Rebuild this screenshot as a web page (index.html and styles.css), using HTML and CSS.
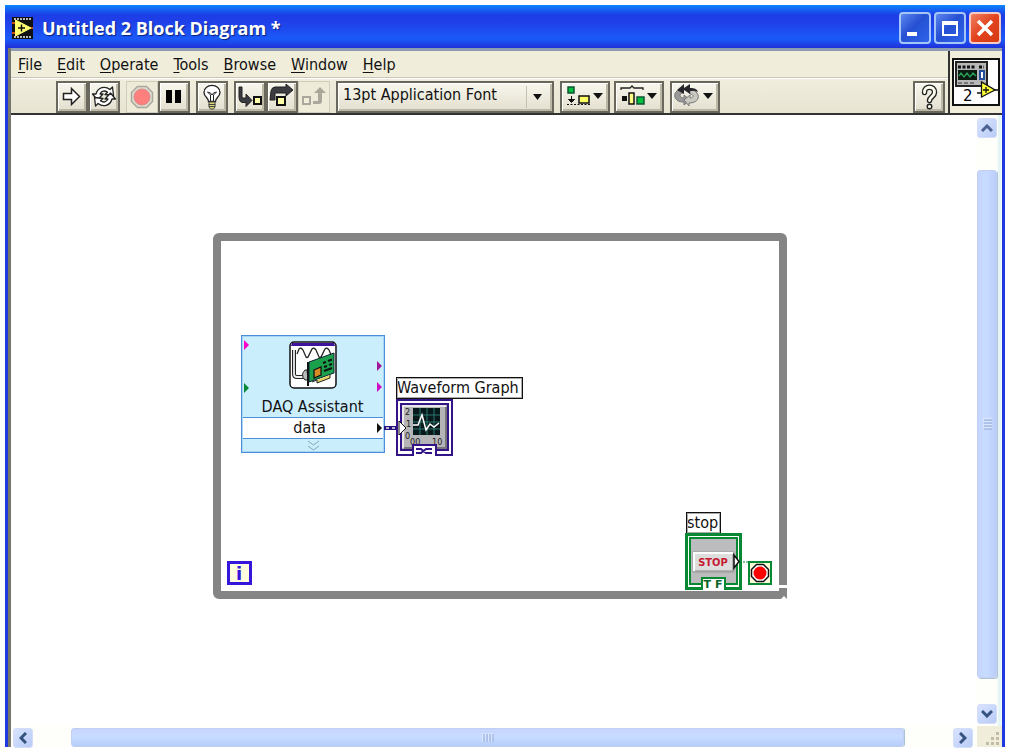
FILE: index.html
```html
<!DOCTYPE html>
<html lang="en">
<head>
<meta charset="utf-8">
<title>Untitled 2 Block Diagram *</title>
<link rel="stylesheet" href="styles.css">
</head>
<body>
<main class="window">
  <header class="titlebar">
    <svg class="app-icon" width="21" height="22" viewBox="0 0 21 22" aria-hidden="true">
      <rect width="21" height="22" fill="#111"/>
      <path d="M2 2h17M2 20h17" stroke="#eee" stroke-width="1.500" stroke-dasharray="2 1"/>
      <path d="M0 6h4M0 16h4M17 11h4" stroke="#f60" stroke-width="1.500"/>
      <path d="M3.500 3V19L19 11Z" fill="#ffff70" stroke="#ffff70"/>
      <path d="M6 11h7M9.500 7.500v7" stroke="#111" stroke-width="1.500"/>
    </svg>
    <h1 class="title">Untitled 2 Block Diagram *</h1>
    <div class="window-controls">
      <button class="caption-button" aria-label="Minimize"><svg width="28" height="28" viewBox="0 0 28 28"><rect x="6" y="18" width="10" height="4" fill="#fff"/></svg></button>
      <button class="caption-button" aria-label="Maximize"><svg width="28" height="28" viewBox="0 0 28 28"><path d="M6 7h16v15H6zM8 11v9h12v-9z" fill="#fff" fill-rule="evenodd"/></svg></button>
      <button class="caption-button close" aria-label="Close"><svg width="28" height="28" viewBox="0 0 28 28"><path d="M7 7L21 21M21 7L7 21" stroke="#fff" stroke-width="3.500"/></svg></button>
    </div>
  </header>

  <div class="client">
    <div class="bars">
      <div class="bars-main">
        <nav class="menubar">
          <button class="menu"><u>F</u>ile</button>
          <button class="menu"><u>E</u>dit</button>
          <button class="menu"><u>O</u>perate</button>
          <button class="menu"><u>T</u>ools</button>
          <button class="menu"><u>B</u>rowse</button>
          <button class="menu"><u>W</u>indow</button>
          <button class="menu"><u>H</u>elp</button>
        </nav>
        <div class="toolbar">
          <div class="group">
            <button class="tool" aria-label="Run"><svg width="28" height="28" viewBox="0 0 28 28"><path d="M5.500 10.500h8v-5l8 8-8 8v-5h-8z" fill="#fff" stroke="#222" stroke-width="1.500"/></svg></button>
            <button class="tool" aria-label="Run continuously"><svg width="28" height="28" viewBox="0 0 28 28"><g fill="#fff" stroke="#222" stroke-width="1.300" stroke-linejoin="round"><path d="M6 11C8 4 15 2.500 20 6.500L22.500 4l1 8.500-8.500-1 2.500-2.300C14.500 7 11.500 8 10 11h3l-5.500 6L2.500 11z"/><path d="M22 16c-2 7-9 8.500-14 4.500L5.500 23l-1-8.500 8.500 1-2.500 2.300c3 2.200 6 1.200 7.500-1.800h-3l5.500-6 5 6z"/></g></svg></button>
          </div>
          <div class="group">
            <button class="tool flat" aria-label="Abort"><svg width="28" height="28" viewBox="0 0 28 28"><path d="M9.500 3.500h9l6 6v9l-6 6h-9l-6-6v-9z" fill="#dedbd0" stroke="#aaa79d" stroke-width="1.500"/><circle cx="14" cy="14" r="8" fill="#ff7f7f" stroke="#d88e88"/></svg></button>
            <button class="tool" aria-label="Pause"><svg width="28" height="28" viewBox="0 0 28 28"><path d="M6 7h6v13H6zM15 7h6v13h-6z" fill="#000"/></svg></button>
          </div>
          <button class="tool" aria-label="Highlight execution"><svg width="28" height="28" viewBox="0 0 28 28"><path d="M10.500 18.500c0-4-4.500-4.500-4.500-9C6 0 22 0 22 9.500c0 4.500-4.500 5-4.500 9z" fill="#fff" stroke="#222" stroke-width="1.300"/><path d="M12.500 18V12l-3-3 3 1 1.500 2 1.500-2 3-1-3 3v6" fill="none" stroke="#222"/><path d="M11 19h6v5l-1.500 2h-3L11 24z" fill="#dddb72" stroke="#444"/><path d="M10.500 21.500h7M11 23.500h6" stroke="#444"/></svg></button>
          <div class="group">
            <button class="tool" aria-label="Step into"><svg width="28" height="28" viewBox="0 0 28 28"><path d="M3 4h3v11h4v-4l6 6.500-6 6v-4H6q-3-1-3-5z" fill="#3b3b42" stroke="#222"/><rect x="18" y="14" width="7" height="7" fill="#ffffa8" stroke="#111" stroke-width="2"/></svg></button>
            <button class="tool" aria-label="Step over"><svg width="28" height="28" viewBox="0 0 28 28"><path d="M2 17l1-9q1-4 4-4h11V1l7 6-7 6v-3H7v7z" fill="#3b3b42" stroke="#222"/><rect x="9" y="14" width="8" height="8" fill="#ffffa8" stroke="#111" stroke-width="2"/></svg></button>
            <button class="tool flat" aria-label="Step out"><svg width="28" height="28" viewBox="0 0 28 28"><rect x="3" y="14" width="7" height="7" fill="#f1eed9" stroke="#aaa79d" stroke-width="2"/><path d="M13 18h5v-8h-4l6-6 6 6h-4v8q0 3-3 3h-6z" fill="#aaa79d"/></svg></button>
          </div>
          <div class="font-picker">
            <select class="font-select" aria-label="Text settings"><option>13pt Application Font</option></select>
            <svg class="font-arrow" width="9" height="6" viewBox="0 0 9 6"><path d="M0 0h9L4.500 6z" fill="#111"/></svg>
          </div>
          <div class="group spaced">
            <button class="tool wide" aria-label="Align objects"><svg width="44" height="28" viewBox="0 0 44 28"><rect x="5" y="4" width="6" height="6" fill="#00c040" stroke="#153" stroke-width="1.500"/><path d="M8.500 13v6M5.500 16.500l3 3 3-3z" stroke="#111" fill="#111"/><path d="M4 21.500h24" stroke="#111" stroke-dasharray="2 1.500"/><rect x="16" y="13" width="10" height="7" fill="#ff6" stroke="#111" stroke-width="1.500"/><path d="M30 10h10l-5 6z" fill="#111"/></svg></button>
            <button class="tool wide" aria-label="Distribute objects"><svg width="44" height="28" viewBox="0 0 44 28"><path d="M4 7V5h9l2-2 2 2h9v2" fill="none" stroke="#222" stroke-width="1.300"/><rect x="5" y="13" width="5" height="5" fill="#111"/><rect x="12" y="10" width="5" height="11" fill="#ff8" stroke="#111" stroke-width="1.500"/><rect x="20" y="14" width="7" height="7" fill="#00c040" stroke="#153" stroke-width="1.500"/><path d="M30 10h10l-5 6z" fill="#111"/></svg></button>
          </div>
          <button class="tool wide reorder" aria-label="Reorder"><svg width="46" height="28" viewBox="0 0 46 28"><path d="M10 6C2 7 1 14 5 17c2 2 5 2 7 2v3l6-5-6-5v3c-4 0-6-4-1-5z" fill="#999" stroke="#777"/><path d="M17 20c9 0 11-6 8-10-1-2-4-3-7-3v4c4 0 4 4 0 4v-3l-6 5 5 6z" fill="#c9c9c2" stroke="#777"/><path d="M5 7l7-6v4l6-4v4c5 0 7 1 8 4-4-2-6-1-8-1v3l-6-4v4z" fill="#26262a"/><path d="M31 10h10l-5 6z" fill="#111"/></svg></button>
          <button class="tool help" aria-label="Context help"><svg width="28" height="28" viewBox="0 0 28 28" stroke-linecap="round"><path d="M9.500 9.500C9 2.500 20 2.500 19.500 9.500c0 4-5 4.500-5 8" fill="none" stroke="#222" stroke-width="5.500"/><path d="M9.500 9.500C9 2.500 20 2.500 19.500 9.500c0 4-5 4.500-5 8" fill="none" stroke="#fffff0" stroke-width="2.800"/><circle cx="14.500" cy="23.500" r="2.300" fill="#fffff0" stroke="#222" stroke-width="1.400"/></svg></button>
        </div>
      </div>
      <div class="vi-pane">
        <svg width="48" height="48" viewBox="0 0 48 48" role="img" aria-label="VI icon 2">
          <rect x="1" y="1" width="46" height="46" fill="#fff" stroke="#111" stroke-width="2"/>
          <rect x="4" y="4" width="31" height="24" fill="#b8b8b8" stroke="#222" stroke-width="2"/>
          <path d="M6 9h18M27 9h5" stroke="#111" stroke-width="3" stroke-dasharray="3 1.500"/>
          <rect x="6" y="12" width="19" height="10" fill="#0b1b10"/>
          <path d="M7 18l2-3 3 4 3-4 3 4 3-4 3 3" fill="none" stroke="#28a35a" stroke-width="1.300"/>
          <rect x="28" y="13" width="4" height="8" fill="#fff" stroke="#234e9b" stroke-width="2"/>
          <path d="M6 25h17" stroke="#333" stroke-dasharray="4 2"/>
          <text x="11" y="43" class="glyph-two">2</text>
          <path d="M25 35h5M42 32h5" stroke="#111" stroke-width="1.500"/>
          <path d="M29.500 24v15L43 32z" fill="#ffff39" stroke="#111" stroke-width="1.300"/>
          <path d="M31 32h6M34 29v6" stroke="#111" stroke-width="1.300"/>
        </svg>
      </div>
    </div>

    <div class="workspace">
      <section class="canvas" aria-label="Block diagram">
        <div class="while-loop"></div>
        <svg class="resize-corner" width="11" height="14" viewBox="0 0 11 14"><path d="M0 0h11v3H2z" fill="#fff"/><path d="M5 14l3-3 3 3z" fill="#fff"/></svg>

        <div class="daq">
          <div class="daq-head">
            <svg width="48" height="48" viewBox="0 0 48 48" aria-hidden="true">
              <rect x="1" y="1" width="46" height="46" rx="4" fill="#fff" stroke="#111" stroke-width="1.500"/>
              <path d="M3 2h42l1 3H2z" fill="#3d159c"/>
              <path d="M8 13l2-5q2-2 4 1l3 7q1 1 2 0l4-8q2-2 4 1l3 7q1 1 2 0l4-8q2-2 4 1l3 7" fill="none" stroke="#222" stroke-width="1.300"/>
              <path d="M5 9v24q0 3 3 3h7" fill="none" stroke="#222" stroke-width="4"/>
              <path d="M5 9v24q0 3 3 3h7" fill="none" stroke="#eee" stroke-width="1.800"/>
              <path d="M18 29h-2q-5 5 0 10h3z" fill="#bbb" stroke="#222"/>
              <path d="M19 21v24" stroke="#111" stroke-width="2"/>
              <path d="M20 21l25-9v20L20 41z" fill="#1ba04c" stroke="#123"/>
              <path d="M25 29l7-3v8l-7 3z" fill="#d88b24" stroke="#111" stroke-width="1.300"/>
              <path d="M34 22l3-1M39 20l4-1.500M35 26l3-1M40 24l3-1M35 30l8-3" stroke="#111" stroke-width="2"/>
              <path d="M23 41l5-2v3l13-5v-3" fill="#e3d25d" stroke="#222"/>
            </svg>
            <span>DAQ Assistant</span>
          </div>
          <div class="daq-data">data</div>
          <div class="daq-foot"><svg width="13" height="11" viewBox="0 0 13 11"><path d="M1 1l5.500 4L12 1M1 6l5.500 4L12 6" fill="none" stroke="#82a9b7"/></svg></div>
          <svg class="daq-ports" width="142" height="116" viewBox="0 0 142 116">
            <path d="M2 4l5 5-5 5z" fill="#f0c"/><path d="M2 47l5 5-5 5z" fill="#078837"/>
            <path d="M135 25l5 5-5 5z" fill="#a0169a"/><path d="M135 46l5 5-5 5z" fill="#d10bc5"/><path d="M135 87l5 5-5 5z" fill="#111"/>
          </svg>
        </div>
        <svg class="graph-wire" width="13" height="4" viewBox="0 0 13 4"><path d="M0 2h13" stroke="#26107f" stroke-width="4"/><path d="M2 2h11" stroke="#eee" stroke-width="1.500" stroke-dasharray="3 3"/></svg>
        <div class="node-label graph-label">Waveform Graph</div>
        <svg class="graph-terminal" width="57" height="57" viewBox="0 0 57 57" role="img" aria-label="Waveform Graph terminal">
          <rect x="1" y="1" width="55" height="55" fill="#fff" stroke="#321486" stroke-width="2"/>
          <rect x="5" y="5" width="47" height="46" fill="#b5b5b7" stroke="#321486" stroke-width="2"/>
          <path d="M7 49V7h43" stroke="#e8e8e8" fill="none" stroke-width="2"/>
          <path d="M50 8v41H8" stroke="#777" fill="none" stroke-width="2"/>
          <rect x="17" y="9" width="27" height="27" fill="#08191b"/>
          <path d="M24 9v27M31 9v27M38 9v27M17 16h27M17 23h27M17 30h27" stroke="#28766f"/>
          <path d="M17 26h5l4-10 4 15 4-6 4 3 5-4" fill="none" stroke="#fff" stroke-width="1.500"/>
          <text class="axis" x="9" y="16">2</text><text class="axis" x="10" y="28">1</text><text class="axis" x="9" y="40">0</text>
          <text class="axis" x="14" y="46">00</text><text class="axis" x="36" y="46">10</text>
          <path d="M3 22l7 7-7 7z" fill="#fff" stroke="#111"/>
          <path d="M17 57V46h23v11" fill="#fff" stroke="#321486" stroke-width="2"/>
          <path d="M20 50h5l5 4h6M20 54h5l5-4h6" fill="none" stroke="#321486" stroke-width="2"/>
        </svg>

        <svg class="iteration" width="25" height="24" viewBox="0 0 25 24" role="img" aria-label="Iteration terminal"><rect x="1.500" y="1.500" width="22" height="21" fill="#ffffe0" stroke="#3517dc" stroke-width="3"/><text x="12" y="19" class="glyph-i">i</text></svg>

        <div class="node-label stop-label">stop</div>
        <svg class="stop-wire" width="10" height="2" viewBox="0 0 10 2"><path d="M0 1h10" stroke="#078832" stroke-dasharray="2 1"/></svg>
        <svg class="stop-terminal" width="57" height="57" viewBox="0 0 57 57" role="img" aria-label="Stop button terminal">
          <rect x="1.500" y="1.500" width="54" height="54" fill="#fff" stroke="#078832" stroke-width="3"/>
          <rect x="5" y="5" width="47" height="46" fill="#bcbcbe" stroke="#078832" stroke-width="2"/>
          <rect x="8" y="19" width="41" height="20" fill="#ddd" stroke="#999"/>
          <path d="M9 38V20h39" fill="none" stroke="#fff" stroke-width="2"/>
          <path d="M48 21v17H10" fill="none" stroke="#888"/>
          <text x="28" y="33" class="glyph-stop">STOP</text>
          <path d="M49 22v13l5-6.500z" fill="#fff" stroke="#111" stroke-width="1.500"/>
          <path d="M17 57V45h23v12" fill="#fff" stroke="#078832" stroke-width="2"/>
          <text x="28" y="55" class="glyph-tf">T F</text>
        </svg>
        <svg class="condition" width="24" height="24" viewBox="0 0 24 24" role="img" aria-label="Loop condition"><rect x="1" y="1" width="22" height="22" fill="#ffffdc" stroke="#078832" stroke-width="2"/><path d="M8.500 3.500h7l5 5v7l-5 5h-7l-5-5v-7z" fill="#fff" stroke="#111" stroke-width="1.500"/><circle cx="12" cy="12" r="6.500" fill="#f00"/></svg>
      </section>

      <div class="vscroll">
        <button class="scroll-button" aria-label="Scroll up"><svg width="12" height="8" viewBox="0 0 12 8"><path d="M1 7l5-5 5 5" fill="none" stroke="#4c6391" stroke-width="3"/></svg></button>
        <div class="vtrack"><div class="vthumb"><svg width="9" height="12" viewBox="0 0 9 12"><path d="M0 1h9M0 4h9M0 7h9M0 10h9" stroke="#eef4fe"/><path d="M1 2h8M1 5h8M1 8h8M1 11h8" stroke="#8ba7d8"/></svg></div></div>
        <button class="scroll-button" aria-label="Scroll down"><svg width="12" height="8" viewBox="0 0 12 8"><path d="M1 1l5 5 5-5" fill="none" stroke="#34537f" stroke-width="3"/></svg></button>
      </div>

      <div class="hscroll">
        <button class="scroll-button" aria-label="Scroll left"><svg width="8" height="12" viewBox="0 0 8 12"><path d="M7 1L2 6l5 5" fill="none" stroke="#34537f" stroke-width="3"/></svg></button>
        <div class="htrack"><div class="hthumb"><svg width="12" height="9" viewBox="0 0 12 9"><path d="M1 0v9M4 0v9M7 0v9M10 0v9" stroke="#eef4fe"/><path d="M2 1v8M5 1v8M8 1v8M11 1v8" stroke="#8ba7d8"/></svg></div></div>
        <button class="scroll-button" aria-label="Scroll right"><svg width="8" height="12" viewBox="0 0 8 12"><path d="M1 1l5 5-5 5" fill="none" stroke="#34537f" stroke-width="3"/></svg></button>
      </div>
      <div class="size-grip"><svg width="15" height="15" viewBox="0 0 15 15"><path d="M11 1h3v3h-3zM11 6h3v3h-3zM11 11h3v3h-3zM6 6h3v3H6zM6 11h3v3H6zM1 11h3v3H1z" fill="#c2bca4"/></svg></div>
    </div>
  </div>
</main>
</body>
</html>
```
FILE: styles.css
```css
* { box-sizing: border-box; }

body {
  margin: 0;
  padding: 5px 4px 5px 5px;
  height: 100vh;
  min-height: 600px;
  background: #fff;
  color: #111;
  font: 16px/20px "DejaVu Sans Condensed", "DejaVu Sans", sans-serif;
}

button {
  padding: 0;
  border: 0;
  background: none;
  color: inherit;
  font: inherit;
}

svg { display: block; flex: none; }

.window { display: flex; flex-direction: column; height: 100%; }

.titlebar {
  display: flex;
  align-items: center;
  gap: 9px;
  flex: none;
  height: 43px;
  padding: 2px 4px 0 7px;
  background: linear-gradient(#0b86fc 0, #1467f5 4px, #1d3de6 10px, #1f41ea 18px, #1a5af8 34px, #2030d8 100%);
}

.title {
  flex: 1;
  margin: 0;
  color: #fff;
  font: bold 18px/26px "Open Sans", sans-serif;
  text-shadow: 1px 1px 1px #0a2480;
}

.window-controls { display: flex; gap: 3px; }

.caption-button {
  width: 32px;
  height: 32px;
  border: 2px solid #a5c4f8;
  border-radius: 4px;
  background: linear-gradient(135deg, #5d87ee, #2650d2 45%, #2e64ea);
}

.close { background: linear-gradient(135deg, #f08060, #e2421e 50%, #d63c12); border-color: #f5ccc5; }

.client {
  display: flex;
  flex-direction: column;
  flex: 1;
  min-height: 0;
  padding-left: 1px;
  border: solid #2038e0;
  border-width: 0 3px 0 3px;
  background: #77776b;
}

.bars {
  display: flex;
  flex: none;
  margin-left: 2px;
  border-top: 3px solid #8c9cb4;
  border-bottom: 2px solid #333;
  background: #f0eddb;
}

.bars-main { flex: 1; min-width: 0; }

.menubar {
  display: flex;
  gap: 15px;
  padding: 4px 7px 2px;
  border-bottom: 1px solid #c9c6b8;
}

.menu { height: 20px; white-space: nowrap; }
.menu u { text-underline-offset: 2px; }

.toolbar {
  display: flex;
  align-items: center;
  gap: 6px;
  padding: 2px 3px 0 45px;
  border-top: 1px solid #fff;
  background: linear-gradient(#f0eddd, #e8e4d2);
}

.group { display: flex; }
.spaced { gap: 4px; }

.tool {
  display: grid;
  place-items: center;
  flex: none;
  width: 32px;
  height: 32px;
  border: 2px solid #6a685c;
  background: linear-gradient(#f8f7ed, #e3dfcf);
  box-shadow: inset 1px 1px #fff, inset -2px -2px #bcb8a5;
}

.flat { border: 1px solid #d0cdbe; background: #eeebd9; box-shadow: none; }
.wide { width: 50px; }
.help { margin-left: auto; }

.font-picker { position: relative; width: 218px; }

.font-select {
  appearance: none;
  display: block;
  width: 100%;
  height: 32px;
  padding: 0 36px 4px 5px;
  border: 2px solid #6a685c;
  border-radius: 0;
  background: linear-gradient(#c4c1b2, #c4c1b2) right 25px top 3px / 1px 22px no-repeat, linear-gradient(#f8f7ed, #e3dfcf);
  box-shadow: inset 1px 1px #fff, inset -2px -2px #bcb8a5;
  color: #111;
  font: inherit;
}

.font-arrow { position: absolute; top: 13px; right: 12px; pointer-events: none; }

.vi-pane {
  display: grid;
  place-items: center;
  flex: none;
  width: 54px;
  border-left: 2px solid #333;
}

.workspace {
  display: grid;
  grid-template: minmax(0, 1fr) 21px / minmax(0, 1fr) 25px;
  flex: 1;
  min-height: 0;
  margin-left: 2px;
  background: #fff;
}

.canvas { position: relative; overflow: hidden; }

.while-loop {
  position: absolute;
  left: 202px;
  top: 118px;
  width: 574px;
  height: 366px;
  border: 8px solid #858585;
  border-radius: 6px 6px 0 6px;
}

.resize-corner { position: absolute; left: 765px; top: 470px; }

.daq {
  position: absolute;
  left: 230px;
  top: 220px;
  width: 144px;
  border: 1px solid #4c8fd8;
  outline: 1px solid #a8d4f5;
  outline-offset: -2px;
  background: #cbeefd;
  text-align: center;
}

.daq-head {
  display: flex;
  flex-direction: column;
  align-items: center;
  gap: 8px;
  padding: 5px 3px 0 2px;
}

.daq-data {
  height: 22px;
  padding-right: 7px;
  border: solid #4c8fd8;
  border-width: 1px 0;
  background: #fff;
}

.daq-foot { display: grid; place-items: center; height: 13px; }
.daq-ports { position: absolute; left: 0; top: 0; }
.graph-wire { position: absolute; left: 373px; top: 311px; }

.node-label {
  position: absolute;
  border: 1px solid #111;
  outline: 1px solid #aaa;
  outline-offset: -2px;
  background: #fff;
  white-space: nowrap;
}

.graph-label { left: 385px; top: 262px; width: 127px; height: 22px; }
.graph-terminal { position: absolute; left: 385px; top: 284px; }
.iteration { position: absolute; left: 216px; top: 446px; }
.stop-label { left: 675px; top: 397px; width: 35px; height: 22px; }
.stop-terminal { position: absolute; left: 674px; top: 418px; }
.stop-wire { position: absolute; left: 729px; top: 446px; }
.condition { position: absolute; left: 737px; top: 446px; }

.glyph-two { font: 15px "DejaVu Sans", sans-serif; }
.glyph-i { font: bold 18px "DejaVu Sans", sans-serif; fill: #3517dc; text-anchor: middle; }
.glyph-stop { font: bold 11px "DejaVu Sans Condensed", sans-serif; fill: #c51b32; text-anchor: middle; }
.glyph-tf { font: bold 11px "DejaVu Sans", sans-serif; fill: #066326; text-anchor: middle; }
.axis { font: 9px "DejaVu Sans Condensed", sans-serif; fill: #222; }

.vscroll {
  display: flex;
  flex-direction: column;
  padding: 3px 5px 2px 0;
  background: linear-gradient(to right, #fefefa 0, #fefefa 20px, #e2f3f3 22px, #eefafa 100%);
}

.scroll-button {
  display: grid;
  place-items: center;
  flex: none;
  width: 20px;
  height: 20px;
  border: 1px solid #d3ddfa;
  border-radius: 3px;
  background: linear-gradient(135deg, #d8e3ff, #b9cbf6);
}

.vtrack { display: flex; flex: 1; min-height: 0; padding: 32px 0 26px; }

.vthumb, .hthumb {
  display: grid;
  place-items: center;
  flex: 1;
  border: 1px solid #c0cff2;
  border-radius: 3px;
}

.vthumb { background: linear-gradient(to right, #c6d5ff, #c8dcff 45%, #bccdfa); box-shadow: 1px 1px #b0c6d5; }

.hscroll { display: flex; padding: 2px 4px 0 2px; background: #fefefa; }
.htrack { display: flex; flex: 1; min-width: 0; padding: 0 49px 0 38px; }
.hthumb { background: linear-gradient(#c6d5ff, #c8dcff 45%, #b6cdfa); box-shadow: 1px 0 #a9c3d6; }

.size-grip { display: grid; place-items: end; padding: 0 2px 1px 0; background: #f0eddb; }
```
